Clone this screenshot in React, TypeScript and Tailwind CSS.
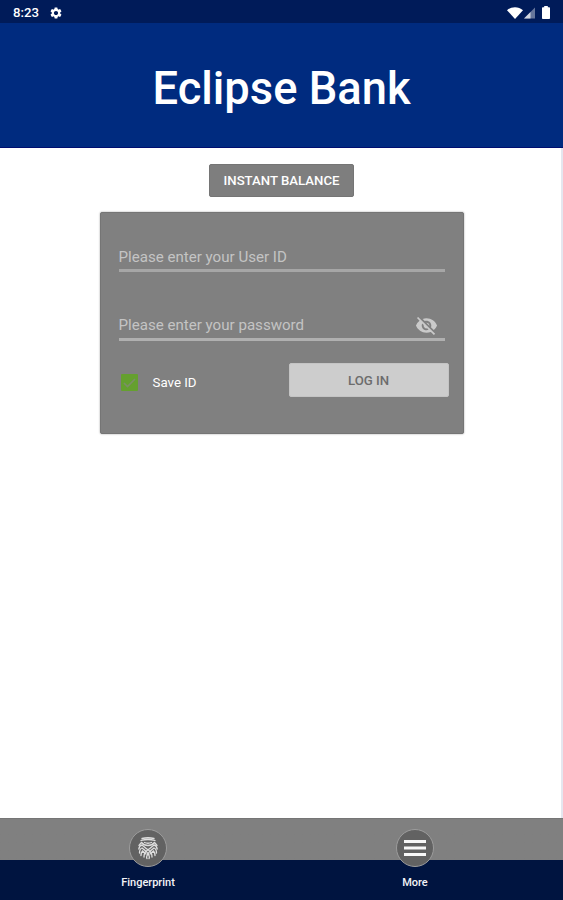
import { useState } from "react";
import { MdSettings, MdVisibilityOff, MdVisibility } from "react-icons/md";

function StatusBar() {
  return (
    <div className="flex h-[23px] shrink-0 items-center justify-between bg-[#001b59] pl-[13px] pr-[13px] pt-[2px] text-white">
      <div className="flex items-center gap-[9px]">
        <span className="w-[27px] whitespace-nowrap text-[13.2px] font-medium leading-none">8:23</span>
        <MdSettings className="h-[14px] w-[14px]" aria-hidden="true" />
      </div>
      <div className="flex items-center">
        {/* wifi */}
        <svg width="16" height="12" viewBox="0 0 16 12" fill="currentColor" aria-hidden="true">
          <path d="M0 3.2C4.6-.9 11.4-.9 16 3.2L8 12z" />
        </svg>
        {/* cell signal, partly filled */}
        <svg className="mr-[7px] ml-px" width="11" height="12" viewBox="0 0 11 12" fill="currentColor" aria-hidden="true">
          <path d="M11 .5V11.5H0z" opacity=".4" />
          <path d="M6.5 5v6.5H0z" opacity=".7" />
        </svg>
        {/* battery */}
        <svg width="8" height="13" viewBox="0 0 8 13" fill="currentColor" aria-hidden="true">
          <path d="M2.2 0h3.6v1.3h1.4q.8 0 .8.8v10.1q0 .8-.8.8H.8Q0 13 0 12.2V2.1q0-.8.8-.8h1.4z" />
        </svg>
      </div>
    </div>
  );
}

function FingerprintIcon() {
  return (
    <svg
      width="22"
      height="24"
      viewBox="0 0 22 24"
      fill="none"
      stroke="#dedede"
      strokeWidth="1.3"
      strokeLinecap="round"
      aria-hidden="true"
    >
      <path d="M5 2.5Q11 1 17 2.5M4 4.5Q11 2.5 18 4.5" />
      <path d="M4.5 6.5Q7 9.5 11 9.5t6.500-3M7.5 6.500q3.500 1.500 7 0" />
      <path d="M2 9.5q1.500-2 2.500-3M20 9.500q-1.500-2-2.500-3" />
      <path d="M1.800 13Q2.500 9.500 5 9q4 3.500 7 5.500t3 6.500" />
      <path d="M20.200 13Q19.500 9.500 17 9q-4 3.500-7 5.500t-3 6.500" />
      <path d="M2.500 17q0-4 2.500-5 5 3.500 6.500 6.500t.5 4" />
      <path d="M19.500 17q0-4-2.500-5-5 3.500-6.500 6.500t-.5 4" />
      <path d="M4 19.500q0-3 1.500-4.500l3.500 3M18 19.500q0-3-1.500-4.500L13 18" />
    </svg>
  );
}

function NavItem({ label, children }: { label: string; children: React.ReactNode }) {
  return (
    <button type="button" className="flex w-[80px] flex-col items-center">
      <span className="flex h-[38px] w-[38px] items-center justify-center rounded-full border-[1.5px] border-[#9c9c9c] bg-[#626262]">
        {children}
      </span>
      <span className="mt-[9px] text-[11px] font-medium leading-[14px] text-[#f4f4f7]">{label}</span>
    </button>
  );
}

export default function App() {
  const [saveId, setSaveId] = useState(true);
  const [showPassword, setShowPassword] = useState(false);
  const EyeIcon = showPassword ? MdVisibility : MdVisibilityOff;

  return (
    <div className="flex h-[900px] w-full flex-col bg-white font-[Roboto,sans-serif]">
      <StatusBar />
      <header className="flex h-[125px] shrink-0 items-center justify-center border-b border-[#000e70] bg-[#002b7f] pt-[8px]">
        <h1 className="text-[45.3px] font-medium leading-none text-white">Eclipse Bank</h1>
      </header>

      <main className="flex flex-1 flex-col items-center border-r-2 border-[#e5e6ef] pl-[2px] pt-[16px]">
        <button
          type="button"
          className="h-[33px] w-[145px] whitespace-nowrap rounded-[2px] border border-[#757575] bg-[#7e7e7e] pt-px text-[13.2px] font-medium text-white"
        >
          INSTANT BALANCE
        </button>

        <form
          onSubmit={(e) => e.preventDefault()}
          className="mt-[15px] flex h-[222px] w-[364px] flex-col rounded-[2px] border border-[#757575] bg-[#808080] pl-[18px] pr-[14px] shadow-[0_0_2px_#999]"
        >
          <div className="mr-[4px] mt-[31px] flex h-[28px] items-center border-b-[3px] border-[#a6a6a6]">
            <input
              type="text"
              aria-label="User ID"
              placeholder="Please enter your User ID"
              className="w-full bg-transparent text-[15.1px] leading-5 text-white outline-none placeholder:text-[#c4c4c4]"
            />
          </div>
          <div className="mr-[4px] mt-[37px] flex h-[32px] items-center border-b-[3px] border-[#b0b0b0]">
            <input
              type={showPassword ? "text" : "password"}
              aria-label="Password"
              placeholder="Please enter your password"
              className="mt-[3px] min-w-0 flex-1 bg-transparent text-[15.1px] leading-5 text-white outline-none placeholder:text-[#c4c4c4]"
            />
            <button
              type="button"
              aria-label="Toggle password visibility"
              onClick={() => setShowPassword(!showPassword)}
              className="mr-[7px] mt-[3px]"
            >
              <EyeIcon className="h-[23px] w-[23px] text-[#cacaca]" />
            </button>
          </div>

          <div className="mt-[22px] flex h-[34px] items-center justify-between">
            <button
              type="button"
              role="checkbox"
              aria-checked={saveId}
              onClick={() => setSaveId(!saveId)}
              className="ml-[2px] mt-[5px] flex items-center gap-[15px] text-[13.3px] text-white"
            >
              <span className="flex h-[17px] w-[17px] items-center justify-center rounded-[1px] bg-[#65a02f]">
                {saveId && (
                  <svg width="13" height="10" viewBox="0 0 13 10" fill="none" stroke="#7b8f66" strokeWidth="1.7" aria-hidden="true">
                    <path d="M1 5l3.5 3.5L12 1" />
                  </svg>
                )}
              </span>
              Save ID
            </button>
            <button
              type="submit"
              className="h-[34px] w-[160px] rounded-[2px] border border-[#c4c4c4] bg-[#cdcdcd] pt-[2px] text-[13.2px] font-medium text-[#6c6c6c]"
            >
              LOG IN
            </button>
          </div>
        </form>
      </main>

      {/* grey strip over navy, the round icons straddle the edge */}
      <nav className="flex h-[82px] shrink-0 justify-between border-t border-[#757575] bg-linear-to-b from-[#808080] from-[41px] to-[#001440] to-[41px] pl-[108px] pr-[108px] pt-[10px]">
        <NavItem label="Fingerprint">
          <FingerprintIcon />
        </NavItem>
        <NavItem label="More">
          <svg width="22" height="16" viewBox="0 0 22 16" fill="#f8f8f8" aria-hidden="true">
            <path d="M0 0h22v3H0zM0 6.5h22v3H0zM0 13h22v3H0z" />
          </svg>
        </NavItem>
      </nav>
    </div>
  );
}
